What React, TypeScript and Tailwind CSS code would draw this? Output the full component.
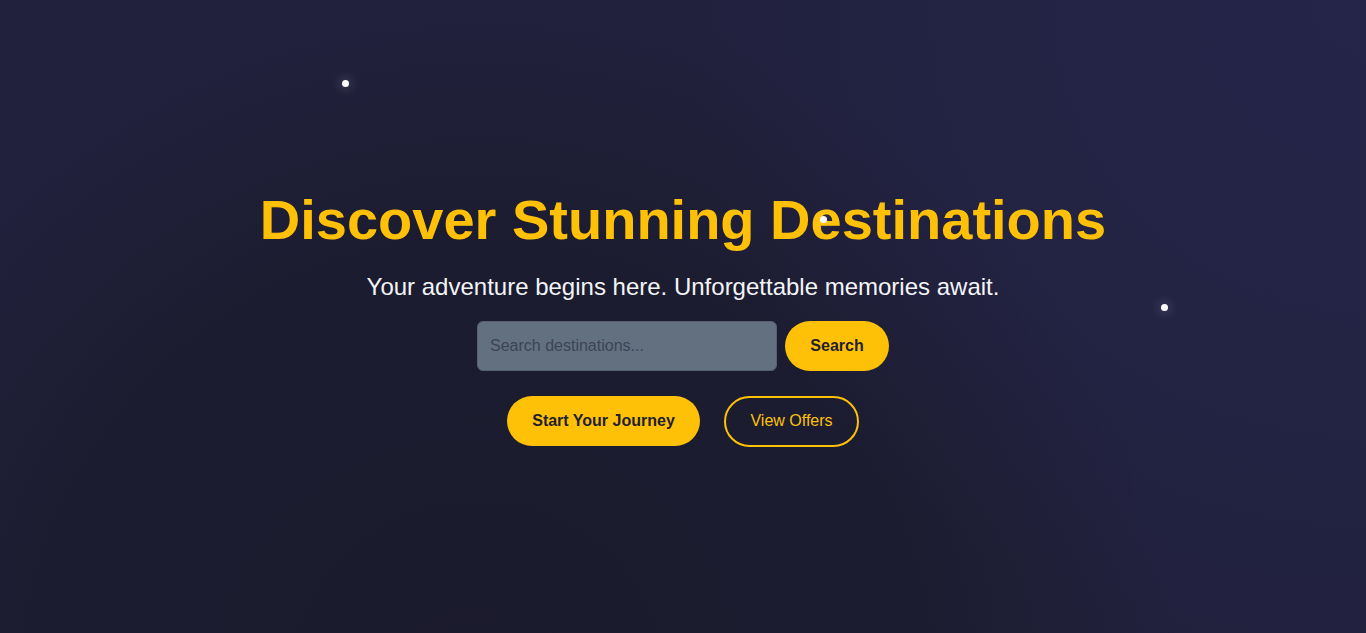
import React from "react";

export default function App() {
  return (
    <div
      className="relative min-h-screen w-full overflow-hidden bg-[#21213e] flex flex-col items-center justify-center"
      style={{ fontFamily: '"Liberation Sans", Arial, sans-serif' }}
    >
      {/* background glows */}
      <div className="pointer-events-none absolute inset-0 bg-[radial-gradient(circle_at_35%_110%,#1b1b2d_0%,#1c1c30_40%,rgba(30,30,55,0)_62%)]" />
      <div className="pointer-events-none absolute inset-0 bg-[radial-gradient(circle_at_100%_0%,#25254a_0%,rgba(36,36,72,0)_45%)]" />

      {/* stars */}
      <div className="absolute left-[342px] top-[80px] h-[7px] w-[7px] rounded-full bg-white shadow-[0_0_10px_4px_rgba(255,255,255,0.1)]" />
      <div className="absolute left-[820px] top-[216px] z-20 h-[7px] w-[7px] rounded-full bg-white shadow-[0_0_10px_4px_rgba(255,255,255,0.1)]" />
      <div className="absolute left-[1161px] top-[304px] h-[7px] w-[7px] rounded-full bg-white shadow-[0_0_10px_4px_rgba(255,255,255,0.1)]" />

      <div className="relative z-10 flex flex-col items-center">
        <h1 className="text-[56px] leading-[1.2] font-bold text-[#ffc107]">
          Discover Stunning Destinations
        </h1>
        <p className="mt-[15px] text-2xl leading-[1.5] text-[#f3f4f6]">
          Your adventure begins here. Unforgettable memories await.
        </p>
        <div className="mt-4 flex items-center gap-2">
          <input
            type="text"
            placeholder="Search destinations..."
            className="h-[50px] w-[300px] rounded-md border border-[#56606e] bg-[#637080] px-3 text-base text-[#1f2937] placeholder:text-[#3b4452] outline-none"
          />
          <button className="h-[50px] w-[104px] rounded-full bg-[#ffc107] text-base font-bold text-[#1f1f2e]">
            Search
          </button>
        </div>
        <div className="mt-[25px] flex items-center gap-6">
          <button className="h-[50px] w-[193px] rounded-full bg-[#ffc107] text-base font-bold text-[#1f1f2e]">
            Start Your Journey
          </button>
          <button className="h-[51px] w-[135px] rounded-full border-2 border-[#ffc107] text-base text-[#ffc107]">
            View Offers
          </button>
        </div>
      </div>
    </div>
  );
}
